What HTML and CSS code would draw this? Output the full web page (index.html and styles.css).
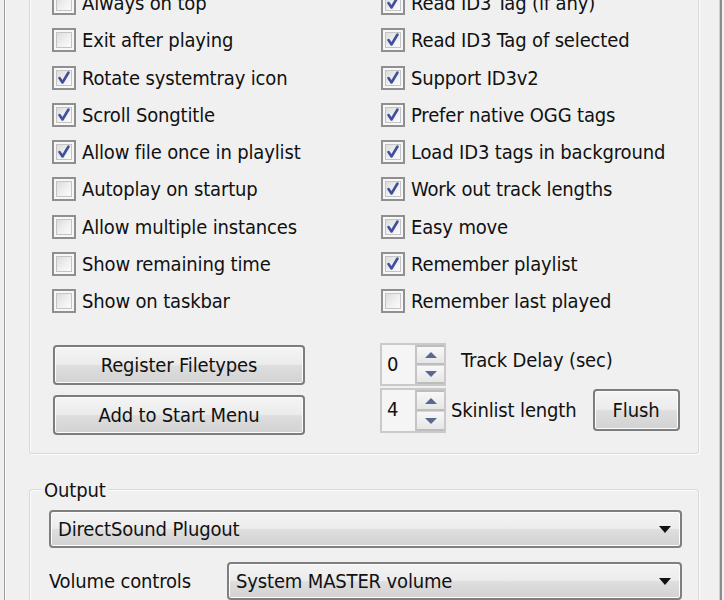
FILE: index.html
```html
<!DOCTYPE html>
<html>
<head>
<meta charset="utf-8">
<link rel="stylesheet" href="styles.css">
</head>
<body>
<div class="tab">
  <div class="group group-opts">
    <div class="checks">
      <div class="col">
        <label class="chk"><span class="cb"></span><span>Always on top</span></label>
        <label class="chk"><span class="cb"></span><span>Exit after playing</span></label>
        <label class="chk"><span class="cb on"><svg viewBox="0 0 24 24"><path d="M7.5 12 L10.5 16.5 L16.5 6.5"/></svg></span><span>Rotate systemtray icon</span></label>
        <label class="chk"><span class="cb on"><svg viewBox="0 0 24 24"><path d="M7.5 12 L10.5 16.5 L16.5 6.5"/></svg></span><span>Scroll Songtitle</span></label>
        <label class="chk"><span class="cb on"><svg viewBox="0 0 24 24"><path d="M7.5 12 L10.5 16.5 L16.5 6.5"/></svg></span><span>Allow file once in playlist</span></label>
        <label class="chk"><span class="cb"></span><span>Autoplay on startup</span></label>
        <label class="chk"><span class="cb"></span><span>Allow multiple instances</span></label>
        <label class="chk"><span class="cb"></span><span>Show remaining time</span></label>
        <label class="chk"><span class="cb"></span><span>Show on taskbar</span></label>
      </div>
      <div class="col">
        <label class="chk"><span class="cb on"><svg viewBox="0 0 24 24"><path d="M7.5 12 L10.5 16.5 L16.5 6.5"/></svg></span><span>Read ID3 Tag (if any)</span></label>
        <label class="chk"><span class="cb on"><svg viewBox="0 0 24 24"><path d="M7.5 12 L10.5 16.5 L16.5 6.5"/></svg></span><span>Read ID3 Tag of selected</span></label>
        <label class="chk"><span class="cb on"><svg viewBox="0 0 24 24"><path d="M7.5 12 L10.5 16.5 L16.5 6.5"/></svg></span><span>Support ID3v2</span></label>
        <label class="chk"><span class="cb on"><svg viewBox="0 0 24 24"><path d="M7.5 12 L10.5 16.5 L16.5 6.5"/></svg></span><span>Prefer native OGG tags</span></label>
        <label class="chk"><span class="cb on"><svg viewBox="0 0 24 24"><path d="M7.5 12 L10.5 16.5 L16.5 6.5"/></svg></span><span>Load ID3 tags in background</span></label>
        <label class="chk"><span class="cb on"><svg viewBox="0 0 24 24"><path d="M7.5 12 L10.5 16.5 L16.5 6.5"/></svg></span><span>Work out track lengths</span></label>
        <label class="chk"><span class="cb on"><svg viewBox="0 0 24 24"><path d="M7.5 12 L10.5 16.5 L16.5 6.5"/></svg></span><span>Easy move</span></label>
        <label class="chk"><span class="cb on"><svg viewBox="0 0 24 24"><path d="M7.5 12 L10.5 16.5 L16.5 6.5"/></svg></span><span>Remember playlist</span></label>
        <label class="chk"><span class="cb"></span><span>Remember last played</span></label>
      </div>
    </div>
    <div class="lower">
      <div class="btns">
        <button class="btn wide">Register Filetypes</button>
        <button class="btn wide">Add to Start Menu</button>
      </div>
      <div class="spins">
        <div class="spin-row first">
          <div class="spin"><span class="val">0</span><span class="arrows"><span class="sb"><i class="up"></i></span><span class="sb"><i class="dn"></i></span></span></div>
          <span class="spin-label l1">Track Delay (sec)</span>
        </div>
        <div class="spin-row second">
          <div class="spin"><span class="val">4</span><span class="arrows"><span class="sb"><i class="up"></i></span><span class="sb"><i class="dn"></i></span></span></div>
          <span class="spin-label l2">Skinlist length</span>
          <button class="btn flush">Flush</button>
        </div>
      </div>
    </div>
  </div>
  <div class="group group-out">
    <div class="legend">Output</div>
    <div class="combo c1"><span>DirectSound Plugout</span><i class="tri"></i></div>
    <div class="vol-row">
      <span class="vol-label">Volume controls</span>
      <div class="combo c2"><span>System MASTER volume</span><i class="tri"></i></div>
    </div>
  </div>
</div>
</body>
</html>
```
FILE: styles.css
```css
html {
  overflow: hidden;
  background: #f0f0f0;
}
body {
  margin: 0;
  padding: 0;
  background: #f0f0f0;
  font-family: "DejaVu Sans Condensed", "DejaVu Sans", sans-serif;
  font-size: 20px;
  letter-spacing: -0.15px;
  color: #111;
}
.tab {
  display: flow-root;
  margin-left: 4px;
  width: 718px;
  height: 600px;
  overflow: hidden;
  box-sizing: border-box;
  border-left: 1px solid #9c9c9c;
  border-right: 2px solid #8c8c8c;
  box-shadow: inset 1px 0 0 #ffffff, inset -1px 0 0 #cfcfcf;
  padding-left: 24px;
}
.group {
  width: 670px;
  box-sizing: border-box;
  border: 1px solid #d9d9d9;
  border-radius: 3px;
  box-shadow: inset 1px 1px 0 #fbfbfb, 1px 1px 0 #fbfbfb;
}
.group-opts {
  margin-top: -40px;
  height: 494px;
  padding-top: 23.4px;
}
.checks {
  display: grid;
  grid-template-columns: 329px 1fr;
  padding-left: 22px;
}
.chk {
  display: flex;
  align-items: center;
  height: 37.25px;
  gap: 6px;
  white-space: nowrap;
}
.cb {
  position: relative;
  width: 24px;
  height: 24px;
  box-sizing: border-box;
  border: 2px solid #8f8f8f;
  background: #f7f7f7;
  flex: none;
}
.cb::before {
  content: "";
  position: absolute;
  left: 2px;
  top: 2px;
  right: 2px;
  bottom: 2px;
  border: 1px solid #c4c4c4;
  background: linear-gradient(135deg, #dcdcdc 0%, #f0f0f0 55%, #fbfbfb 100%);
}
.cb svg {
  position: absolute;
  left: -2px;
  top: -2px;
  width: 24px;
  height: 24px;
}
.cb svg path {
  fill: none;
  stroke: #41509a;
  stroke-width: 2.6;
  stroke-linecap: round;
  stroke-linejoin: round;
}
.lower {
  display: flex;
  margin-top: 25.4px;
}
.btns {
  display: flex;
  flex-direction: column;
  gap: 10px;
  margin-left: 23px;
  width: 252px;
}
.btn {
  font-family: inherit;
  font-size: 20px;
  letter-spacing: -0.15px;
  color: #111;
  height: 40px;
  padding: 0;
  border: 2px solid #7d7d7d;
  border-radius: 4px;
  background: linear-gradient(#f4f4f4 0%, #ececec 48%, #dedede 52%, #d2d2d2 100%);
  box-shadow: inset 0 0 0 1px #fcfcfc;
}
.btn.wide {
  width: 252px;
}
.spins {
  margin-left: 75px;
  margin-top: -2px;
}
.spin-row {
  display: flex;
  align-items: center;
}
.spin {
  display: flex;
  width: 66px;
  height: 43px;
  box-sizing: border-box;
  border: 2px solid #cacaca;
  background: #f5f5f5;
}
.second .spin {
  height: 45px;
  margin-top: 2px;
}
.val {
  width: 32px;
  padding-left: 5px;
  line-height: 39px;
}
.arrows {
  display: flex;
  flex-direction: column;
  width: 30px;
  border-left: 2px solid #c4c4c4;
}
.sb {
  flex: 1;
  display: flex;
  align-items: center;
  justify-content: center;
  border: 2px solid #bdbdbd;
  border-left: none;
  border-right: none;
  background: linear-gradient(#f8f8f8, #e6e6e6);
}
.sb + .sb {
  border-top: 1px solid #d6d6d6;
}
.sb i {
  width: 0;
  height: 0;
  border-left: 6px solid transparent;
  border-right: 6px solid transparent;
}
.sb i.up {
  border-bottom: 6px solid #5a6890;
}
.sb i.dn {
  border-top: 6px solid #5a6890;
}
.spin-label {
  white-space: nowrap;
}
.l1 {
  margin-left: 15px;
  margin-bottom: 9px;
}
.l2 {
  margin-left: 5px;
}
.flush {
  width: 87px;
  height: 42px;
  margin-left: 16px;
}
.group-out {
  margin-top: 35px;
  height: 200px;
}
.legend {
  margin-top: -12px;
  margin-left: 12px;
  padding: 0 2px;
  width: fit-content;
  background: #f0f0f0;
  line-height: 24px;
}
.combo {
  display: flex;
  align-items: center;
  justify-content: space-between;
  height: 38px;
  box-sizing: border-box;
  border: 2px solid #7f7f7f;
  border-radius: 4px;
  background: linear-gradient(#f4f4f4 0%, #ececec 48%, #dedede 52%, #d2d2d2 100%);
  box-shadow: inset 0 0 0 1px #fcfcfc;
  padding: 0 9px 0 7px;
}
.c1 {
  margin-top: 8px;
  margin-left: 19px;
  width: 633px;
}
.tri {
  width: 0;
  height: 0;
  border-left: 6px solid transparent;
  border-right: 6px solid transparent;
  border-top: 7px solid #111;
}
.vol-row {
  display: flex;
  align-items: center;
  margin-top: 14px;
  margin-left: 19px;
}
.vol-label {
  width: 178px;
  white-space: nowrap;
}
.c2 {
  width: 455px;
}
```
